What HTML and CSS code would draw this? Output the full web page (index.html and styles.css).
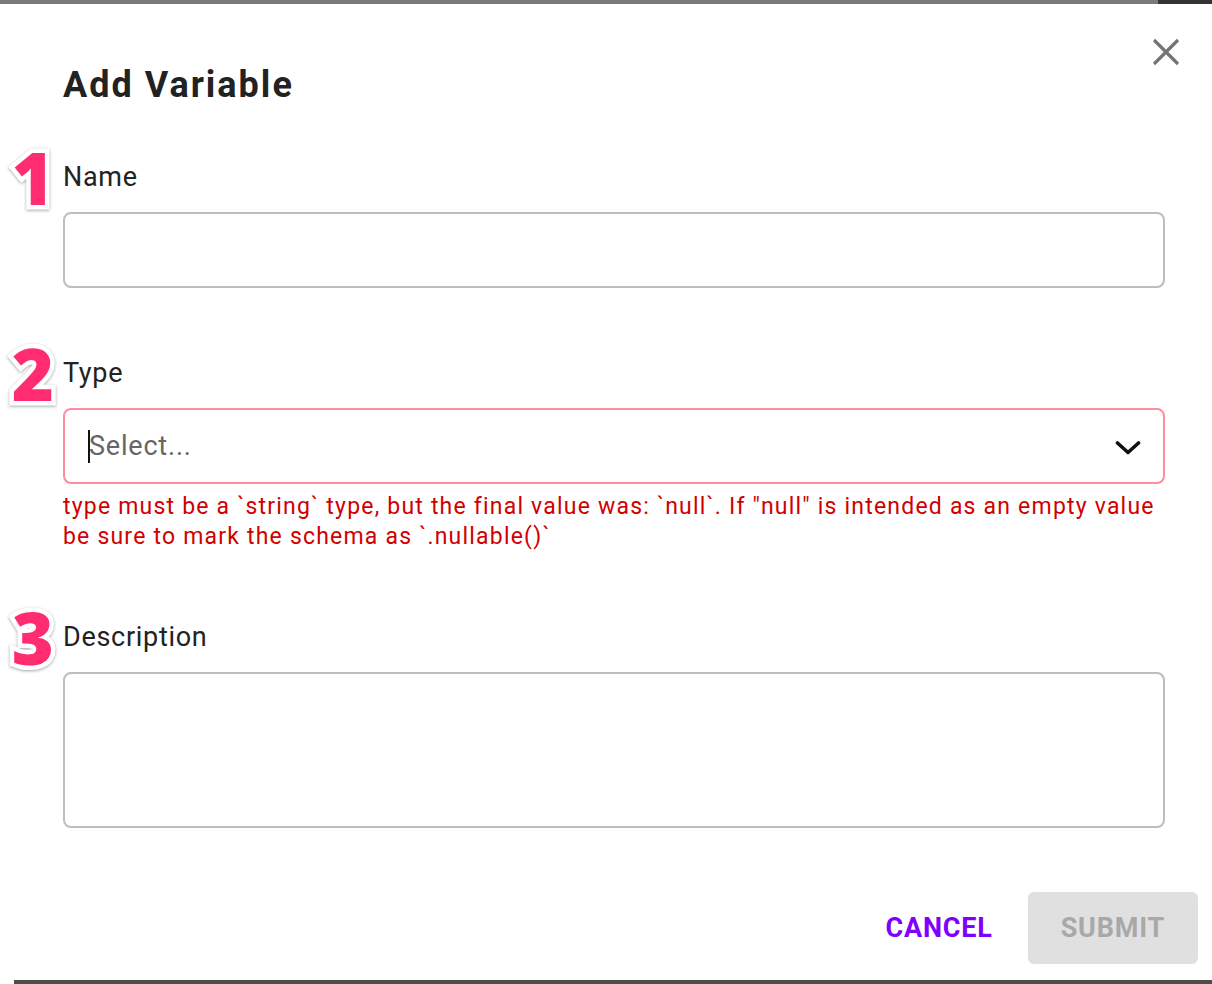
FILE: index.html
```html
<!DOCTYPE html>
<html lang="en">
<head>
<meta charset="utf-8">
<title>Add Variable</title>
<link rel="stylesheet" href="styles.css">
</head>
<body>
<div class="top-strip"><span class="res-tab">RES</span></div>
<div class="dialog">
  <button class="close" aria-label="Close">
    <svg width="28" height="28" viewBox="0 0 28 28"><path d="M2 2 L26 26 M26 2 L2 26" stroke="#757575" stroke-width="3.2" fill="none"/></svg>
  </button>
  <h1 class="title">Add Variable</h1>

  <div class="field">
    <span class="badge">1</span>
    <label class="label">Name</label>
    <div class="input"></div>
  </div>

  <div class="field field-type">
    <span class="badge">2</span>
    <label class="label">Type</label>
    <div class="input select">
      <span class="caret"></span><span class="placeholder">Select...</span>
      <svg class="chevron" width="26" height="16" viewBox="0 0 26 16"><path d="M2.5 3 L13 12.5 L23.5 3" stroke="#111" stroke-width="3.6" fill="none" stroke-linecap="round" stroke-linejoin="round"/></svg>
    </div>
    <p class="error">type must be a `string` type, but the final value was: `null`. If "null" is intended as an empty value be sure to mark the schema as `.nullable()`</p>
  </div>

  <div class="field field-desc">
    <span class="badge">3</span>
    <label class="label">Description</label>
    <div class="input textarea"></div>
  </div>

  <div class="actions">
    <button class="btn cancel">CANCEL</button>
    <button class="btn submit">SUBMIT</button>
  </div>
</div>
<div class="bottom-strip"></div>
</body>
</html>
```

FILE: styles.css
```css
* { box-sizing: border-box; }
html, body { margin: 0; padding: 0; }
body {
  width: 1212px;
  height: 984px;
  overflow: hidden;
  background: #ffffff;
  font-family: Roboto, "Liberation Sans", sans-serif;
  color: #222;
}
.top-strip {
  height: 4px;
  background: #7a7a7a;
  position: relative;
}
.res-tab {
  position: absolute;
  right: 0;
  top: 0;
  width: 54px;
  height: 4px;
  background: #333;
  color: transparent;
  font-size: 1px;
  overflow: hidden;
}
.bottom-strip {
  height: 4px;
  margin-left: 14px;
  background: #4d4d4d;
}
.dialog {
  position: relative;
  height: 976px;
  padding: 0 47px 0 63px;
  display: flex;
  flex-direction: column;
}
.close {
  position: absolute;
  top: 34px;
  left: 1152px;
  width: 28px;
  height: 28px;
  padding: 0;
  border: 0;
  background: none;
  display: flex;
}
.title {
  margin: 59px 0 0;
  font-size: 36px;
  line-height: 44px;
  font-weight: 700;
  letter-spacing: 2px;
  color: #222;
}
.field {
  position: relative;
  display: flex;
  flex-direction: column;
  margin-top: 54px;
}
.field-type { margin-top: 69px; }
.field-desc { margin-top: 69px; }
.label {
  font-size: 27px;
  line-height: 32px;
  letter-spacing: 0.7px;
  color: #222;
}
.badge {
  position: absolute;
  right: calc(100% + 9px);
  top: -17px;
  font-family: "Open Sans", Roboto, sans-serif;
  font-weight: 800;
  font-size: 72px;
  line-height: 66px;
  color: #ff2d6f;
  -webkit-text-stroke: 9px #fff;
  paint-order: stroke fill;
  filter: drop-shadow(0 1px 1.5px rgba(0,0,0,0.35));
}
.input {
  margin-top: 19px;
  height: 76px;
  border: 2px solid #bdbdbd;
  border-radius: 8px;
  background: #fff;
}
.select {
  border-color: #ff8ca1;
  display: flex;
  align-items: center;
  padding-left: 23px;
  position: relative;
}
.caret {
  width: 2px;
  height: 33px;
  background: #111;
}
.placeholder {
  font-size: 27px;
  letter-spacing: 0.8px;
  color: #666;
  margin-left: -1px;
}
.chevron {
  position: absolute;
  right: 22px;
  top: 30px;
}
.error {
  margin: 8px 0 0;
  font-size: 23px;
  line-height: 30px;
  color: #d00000;
  letter-spacing: 1.2px;
}
.textarea {
  height: 156px;
}
.actions {
  margin-top: 64px;
  margin-right: -33px;
  display: flex;
  justify-content: flex-end;
  gap: 2px;
}
.btn {
  height: 72px;
  padding: 0 33px;
  border: 0;
  border-radius: 6px;
  font-family: Roboto, "Liberation Sans", sans-serif;
  font-size: 27px;
  font-weight: 700;
  letter-spacing: 0.8px;
  background: none;
}
.cancel { color: #7f00ff; }
.submit {
  background: #e0e0e0;
  color: #a8a8a8;
}
```
